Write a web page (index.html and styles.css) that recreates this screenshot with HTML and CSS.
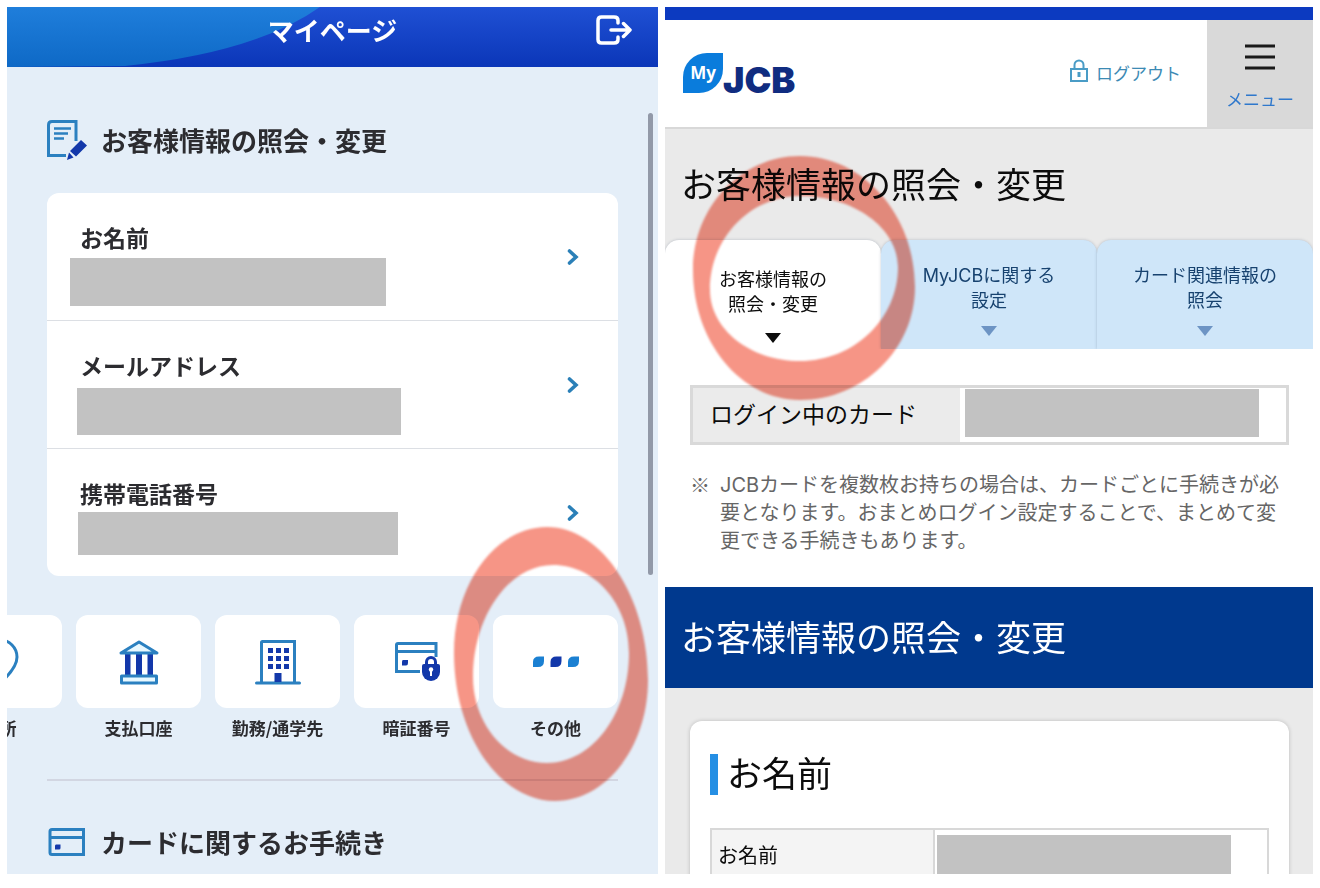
FILE: index.html
```html
<!DOCTYPE html>
<html lang="ja">
<head>
    <meta charset="UTF-8">
    <meta name="viewport" content="width=device-width, initial-scale=1.0">
    <title>マイページ</title>
    <link rel="stylesheet" href="styles.css">
</head>
<body>
    <!-- アプリ画面 -->
    <section class="panel app">
        <header class="app-header">
            <svg class="app-header-wave" viewBox="0 0 651 60" preserveAspectRatio="none" aria-hidden="true">
                <defs>
                    <linearGradient id="wave" x1="0" y1="0" x2="0" y2="1">
                        <stop offset="0" stop-color="#1f7edb"/>
                        <stop offset="1" stop-color="#0e69c6"/>
                    </linearGradient>
                </defs>
                <path d="M0 0H313Q248 46 118 59L0 60Z" fill="url(#wave)"/>
            </svg>
            <h1 class="app-title">マイページ</h1>
            <button class="exit" aria-label="ログアウト">
                <svg width="36" height="30" viewBox="0 0 36 30" fill="none" stroke="#fff" stroke-width="3.500" stroke-linecap="round" stroke-linejoin="round">
                    <path d="M22 8V5.500Q22 2 18 2H5.500Q2 2 2 5.500V24.500Q2 28 5.500 28H18Q22 28 22 24.500V22"/>
                    <path d="M15 15H34M27.500 8.500L34 15L27.500 21.500"/>
                </svg>
            </button>
        </header>

        <main class="app-main">
            <h2 class="section-title">
                <svg width="40" height="40" viewBox="0 0 40 40" fill="none">
                    <path d="M29 21V1.500H5Q1.500 1.500 1.500 5V35.500H19" stroke="#2b80c0" stroke-width="3"/>
                    <path d="M7 8.500H24M7 13.500H21M7 18.500H17" stroke="#2b80c0" stroke-width="2.400"/>
                    <path d="M34 20L40 25.500L29 36.500L23 31ZM22 32.500L26.500 37.500L20 40Z" fill="#1338aa"/>
                </svg>
                お客様情報の照会・変更
            </h2>

            <ul class="info-list">
                <li>
                    <a class="info-row" href="#">
                        <span>
                            <span class="info-label">お名前</span>
                            <span class="mask mask-name"></span>
                        </span>
                        <svg width="12" height="16" viewBox="0 0 12 16"><path d="M2.500 2L9 8L2.500 14" fill="none" stroke="#2b80b8" stroke-width="3.600" stroke-linecap="round"/></svg>
                    </a>
                </li>
                <li>
                    <a class="info-row" href="#">
                        <span>
                            <span class="info-label">メールアドレス</span>
                            <span class="mask mask-mail"></span>
                        </span>
                        <svg width="12" height="16" viewBox="0 0 12 16"><path d="M2.500 2L9 8L2.500 14" fill="none" stroke="#2b80b8" stroke-width="3.600" stroke-linecap="round"/></svg>
                    </a>
                </li>
                <li>
                    <a class="info-row" href="#">
                        <span>
                            <span class="info-label">携帯電話番号</span>
                            <span class="mask mask-phone"></span>
                        </span>
                        <svg width="12" height="16" viewBox="0 0 12 16"><path d="M2.500 2L9 8L2.500 14" fill="none" stroke="#2b80b8" stroke-width="3.600" stroke-linecap="round"/></svg>
                    </a>
                </li>
            </ul>

            <nav class="tiles">
                <a class="tile" href="#">
                    <span class="tile-box">
                        <svg width="46" height="46" viewBox="0 0 46 46" fill="none" stroke="#2b80c0" stroke-width="3">
                            <path d="M23 44Q6 29 6 18A17 17 0 0 1 40 18Q40 29 23 44Z"/>
                        </svg>
                    </span>
                    住所
                </a>
                <a class="tile" href="#">
                    <span class="tile-box">
                        <svg width="46" height="46" viewBox="0 0 46 46" fill="none">
                            <path d="M9 14H14.500V36H9ZM20 14H26V36H20ZM31.500 14H37V36H31.500Z" fill="#1338aa"/>
                            <path d="M5 14L23 3L41 14Z" fill="#e8f8ff" stroke="#2b80c0" stroke-width="3" stroke-linejoin="round"/>
                            <path d="M5.500 37H40.500V44H5.500Z" fill="#e8f8ff" stroke="#2b80c0" stroke-width="3" stroke-linejoin="round"/>
                        </svg>
                    </span>
                    支払口座
                </a>
                <a class="tile" href="#">
                    <span class="tile-box">
                        <svg width="46" height="46" viewBox="0 0 46 46" fill="none">
                            <path d="M6.500 44V3.500Q6.500 2.500 7.500 2.500H39.500V44" stroke="#2b80c0" stroke-width="3"/>
                            <path d="M1.500 44H44.500" stroke="#2b80c0" stroke-width="3" stroke-linecap="round"/>
                            <path d="M13 9h5v5h-5zM21 9h5v5h-5zM29 9h5v5h-5zM13 17h5v5h-5zM21 17h5v5h-5zM29 17h5v5h-5zM13 25h5v5h-5zM21 25h5v5h-5zM29 25h5v5h-5zM19.500 34h7v9h-7z" fill="#1338aa"/>
                        </svg>
                    </span>
                    勤務/通学先
                </a>
                <a class="tile" href="#">
                    <span class="tile-box">
                        <svg width="46" height="46" viewBox="0 0 46 46" fill="none">
                            <path d="M26 32.500H2.500V6Q2.500 4.500 4 4.500H42V18M2 12.500H42" stroke="#2b80c0" stroke-width="3"/>
                            <path d="M9 21H14V24Q14 26.500 12 26.500H8V23Q8 21 9 21Z" fill="#1338aa"/>
                            <path d="M32.500 27V23A4.500 4.500 0 0 1 41.500 23V27" stroke="#1338aa" stroke-width="3"/>
                            <path d="M28 27Q28 25 30 25H44Q46 25 46 27V33A9 9 0 0 1 28 33Z" fill="#1338aa"/>
                            <path d="M37 29.500V37" stroke="#fff" stroke-width="2"/>
                            <circle cx="37" cy="30.500" r="2.200" fill="#fff"/>
                        </svg>
                    </span>
                    暗証番号
                </a>
                <a class="tile" href="#">
                    <span class="tile-box">
                        <svg width="46" height="46" viewBox="0 0 46 46">
                            <path d="M0 28V23Q0 17.500 6 17.500H11V22Q11 28 5 28Z" fill="#1b80d2"/>
                            <path d="M17.500 28V23Q17.500 17.500 23.500 17.500H28.500V22Q28.500 28 22.500 28Z" fill="#1338aa"/>
                            <path d="M35 28V23Q35 17.500 41 17.500H46V22Q46 28 40 28Z" fill="#1b80d2"/>
                        </svg>
                    </span>
                    その他
                </a>
            </nav>

            <h2 class="section-title next">
                <svg width="40" height="40" viewBox="0 0 40 40" fill="none">
                    <path d="M3 9.500Q3 7.500 5 7.500H36.500V32.500H5Q3 32.500 3 30.500ZM3 15.500H36.500" stroke="#2b80c0" stroke-width="3"/>
                    <path d="M9 22.500H13.500V26Q13.500 27.500 12 27.500H8V24Q8 22.500 9 22.500Z" fill="#1338aa"/>
                </svg>
                カードに関するお手続き
            </h2>
        </main>

        <span class="scrollbar"></span>
        <svg class="ring ring-app" width="202" height="282" viewBox="450 523 202 282" aria-hidden="true">
            <path fill-rule="evenodd" d="M547 527C603 527 648 599 648 680C648 747 606 801 555 801C499 801 454 734 454 653C454 583 496 527 547 527ZM553 565C509 565 473 616 473 677C473 724 506 763 547 763C592 763 629 714 629 653C629 604 595 565 553 565Z"/>
        </svg>
    </section>

    <!-- Web サイト画面 -->
    <section class="panel web">
        <header class="web-header">
            <a class="logo" href="#">
                <span class="logo-my">My</span>
                <span class="logo-jcb">JCB</span>
            </a>
            <a class="logout" href="#">
                <svg width="18" height="30" viewBox="0 0 18 30" fill="none" stroke="#4a9cc6" stroke-width="2">
                    <path d="M1 10H17V22H1ZM4.500 10V6A4.500 4.500 0 0 1 13.500 6V10"/>
                    <path d="M9 13V18" stroke-width="3"/>
                </svg>
                ログアウト
            </a>
            <button class="menu">
                <svg width="30" height="28" viewBox="0 0 30 28" stroke="#1a1a1a" stroke-width="3">
                    <path d="M0 3H30M0 14H30M0 25H30"/>
                </svg>
                メニュー
            </button>
        </header>

        <h1 class="page-title">お客様情報の照会・変更</h1>
        <nav class="tabs">
            <a class="tab active" href="#">お客様情報の<br>照会・変更</a>
            <a class="tab" href="#">MyJCBに関する<br>設定</a>
            <a class="tab" href="#">カード関連情報の<br>照会</a>
        </nav>

        <div class="login">
            <dl class="login-card">
                <dt>ログイン中のカード</dt>
                <dd><span class="mask mask-card"></span></dd>
            </dl>
            <p class="note"><span class="note-mark">※</span><span>JCBカードを複数枚お持ちの場合は、カードごとに手続きが必要となります。おまとめログイン設定することで、まとめて変更できる手続きもあります。</span></p>
        </div>

        <h2 class="band">お客様情報の照会・変更</h2>

        <div class="detail">
            <h3 class="detail-title">お名前</h3>
            <table class="detail-table">
                <tr>
                    <th scope="row">お名前</th>
                    <td><span class="mask mask-detail"></span></td>
                </tr>
            </table>
        </div>

        <svg class="ring ring-web" width="230" height="252" viewBox="689 152 230 252" aria-hidden="true">
            <path fill-rule="evenodd" d="M800 156C863 156 915 215 915 287C915 349 863 400 800 400C741 400 693 342 693 270C693 207 741 156 800 156ZM800 196C750 196 710 238 710 290C710 329 750 361 800 361C854 361 898 319 898 267C898 228 854 196 800 196Z"/>
        </svg>
    </section>
</body>
</html>
```
FILE: styles.css
```css
* {
    box-sizing: border-box;
}
body {
    margin: 0;
    padding: 7px 7px 14px;
    height: 100vh;
    display: grid;
    grid-template-columns: 651fr 648fr;
    grid-template-rows: minmax(0, 1fr);
    gap: 7px;
    background: #fff;
    font-family: Inter, "Noto Sans CJK JP", sans-serif;
}
h1, h2, h3, p, ul, dl, dd {
    margin: 0;
    padding: 0;
}
ul {
    list-style: none;
}
a {
    color: inherit;
    text-decoration: none;
}
button {
    padding: 0;
    border: none;
    background: none;
    font-family: inherit;
    cursor: pointer;
}
svg {
    display: block;
    flex-shrink: 0;
}
.panel {
    position: relative;
    overflow: hidden;
}
.mask {
    display: block;
    background: #c2c2c2;
}

/* app */
.app {
    background: #e4eef8;
    color: #2c2c30;
    font-family: "Noto Sans CJK JP", sans-serif;
}
.app-header {
    position: relative;
    display: grid;
    grid-template-columns: 1fr auto 1fr;
    align-items: center;
    height: 60px;
    padding: 0 26px 15px;
    background: linear-gradient(#1f50d4, #0b36b8);
}
.app-header-wave {
    position: absolute;
    top: 0;
    left: 0;
    width: 100%;
    height: 100%;
}
.app-title {
    position: relative;
    grid-column: 2;
    font-size: 26px;
    line-height: 40px;
    color: #fff;
}
.exit {
    position: relative;
    justify-self: end;
}
.app-main {
    padding: 48px 40px 0;
}
.section-title {
    display: flex;
    align-items: center;
    gap: 14px;
    font-size: 26px;
    line-height: 50px;
}
.info-list {
    margin-top: 28px;
    border-radius: 12px;
    background: #fff;
}
.info-list li + li {
    border-top: 1px solid #dcdfe4;
}
.info-row {
    display: flex;
    justify-content: space-between;
    align-items: center;
    height: 127px;
    padding: 0 39px 0 23px;
}
.info-row > span {
    align-self: flex-start;
    padding-top: 29px;
}
.info-label {
    display: block;
    padding-left: 10px;
    font-size: 23px;
    font-weight: bold;
    line-height: 30px;
}
.mask-name {
    width: 316px;
    height: 48px;
    margin-top: 6px;
}
.mask-mail {
    width: 324px;
    height: 47px;
    margin: 8px 0 0 7px;
}
.mask-phone {
    width: 320px;
    height: 43px;
    margin: 4px 0 0 8px;
}
.tiles {
    display: flex;
    justify-content: flex-end;
    gap: 14px;
    margin-top: 39px;
    padding-bottom: 37px;
    border-bottom: 2px solid #d2d6e2;
}
.tile {
    flex: none;
    width: 125px;
    text-align: center;
    font-size: 17px;
    font-weight: bold;
    line-height: 28px;
}
.tile-box {
    display: flex;
    justify-content: center;
    align-items: center;
    height: 93px;
    margin-bottom: 6px;
    border-radius: 12px;
    background: #fff;
}
.next {
    margin-top: 36px;
}
.scrollbar {
    position: absolute;
    top: 106px;
    right: 5px;
    width: 5px;
    height: 462px;
    border-radius: 3px;
    background: #9299a8;
}

/* web */
.web {
    background: #eaeaea;
    color: #0c0c0c;
}
.web-header {
    display: flex;
    align-items: center;
    height: 122px;
    padding-left: 18px;
    border-top: 13px solid #0c3ac0;
    border-bottom: 2px solid #d8d8d8;
    background: #fff;
}
.logo {
    display: flex;
    align-items: flex-end;
    margin: 0 auto 2px 0;
    height: 40px;
}
.logo-my {
    width: 40px;
    border-radius: 24px 0;
    background: #0a7cdc;
    color: #fff;
    font-family: "Noto Sans", sans-serif;
    font-size: 17px;
    font-weight: bold;
    line-height: 40px;
    text-align: center;
}
.logo-jcb {
    color: #102c80;
    font-size: 36px;
    font-weight: 900;
    line-height: 26px;
}
.logout {
    display: flex;
    align-items: center;
    gap: 8px;
    margin-right: 26px;
    color: #3c8ab4;
    font-size: 17px;
    line-height: 26px;
}
.menu {
    display: flex;
    flex-direction: column;
    align-items: center;
    align-self: stretch;
    width: 106px;
    padding-top: 23px;
    gap: 16px;
    background: #d9d9d9;
    color: #2f78cc;
    font-size: 17px;
    line-height: 26px;
}
.page-title {
    padding: 31px 16px 30px;
    font-size: 35px;
    font-weight: normal;
    line-height: 50px;
}
.tabs {
    display: grid;
    grid-template-columns: repeat(3, 1fr);
}
.tab {
    height: 109px;
    padding-top: 23px;
    border-radius: 14px 14px 0 0;
    background: #cfe6f9;
    box-shadow: 0 0 3px rgba(60, 80, 110, 0.3);
    color: #17426f;
    font-size: 18px;
    line-height: 25px;
    text-align: center;
}
.tab::after {
    content: "";
    display: block;
    width: 0;
    margin: 13px auto 0;
    border: 8px solid transparent;
    border-top: 10px solid #6d94c4;
    border-bottom: none;
}
.tab.active {
    padding-top: 27px;
    background: #fff;
    color: #0c0c0c;
}
.tab.active::after {
    margin-top: 16px;
    border-top-color: #0c0c0c;
}
.login {
    position: relative;
    padding: 36px 24px 32px 25px;
    background: #fff;
}
.login-card {
    display: flex;
    height: 60px;
    border: 3px solid #d9d9d9;
}
.login-card dt {
    width: 267px;
    padding-left: 17px;
    background: #ebebeb;
    font-size: 23px;
    line-height: 54px;
}
.login-card dd {
    padding: 1px 0 0 5px;
}
.mask-card {
    width: 294px;
    height: 48px;
}
.note {
    display: flex;
    gap: 10px;
    margin-top: 26px;
    color: #666;
    font-size: 20px;
    line-height: 28px;
}
.note-mark {
    font-family: "Noto Sans CJK JP", sans-serif;
}
.band {
    padding: 26px 16px 25px;
    background: #00398e;
    color: #fff;
    font-size: 35px;
    font-weight: normal;
    line-height: 50px;
}
.detail {
    margin: 33px 24px 0 25px;
    padding: 33px 20px 40px;
    border-radius: 12px;
    background: #fff;
    box-shadow: 0 0 4px rgba(0, 0, 0, 0.2);
}
.detail-title {
    padding-left: 9px;
    border-left: 8px solid #258fe4;
    font-size: 35px;
    font-weight: normal;
    line-height: 41px;
}
.detail-table {
    width: 100%;
    margin-top: 33px;
    border-collapse: collapse;
}
.detail-table th,
.detail-table td {
    border: 2px solid #d8d8d8;
}
.detail-table th {
    width: 40%;
    padding: 0 6px;
    background: #f4f4f4;
    font-size: 20px;
    font-weight: normal;
    text-align: left;
}
.detail-table td {
    padding: 5px 2px;
}
.mask-detail {
    width: 294px;
    height: 39px;
}

/* marker circles */
.ring {
    position: absolute;
    mix-blend-mode: multiply;
    fill: #f69586;
    filter: blur(1px);
}
.ring-app {
    top: 516px;
    right: 6px;
}
.ring-web {
    top: 145px;
    left: 24px;
}
```
